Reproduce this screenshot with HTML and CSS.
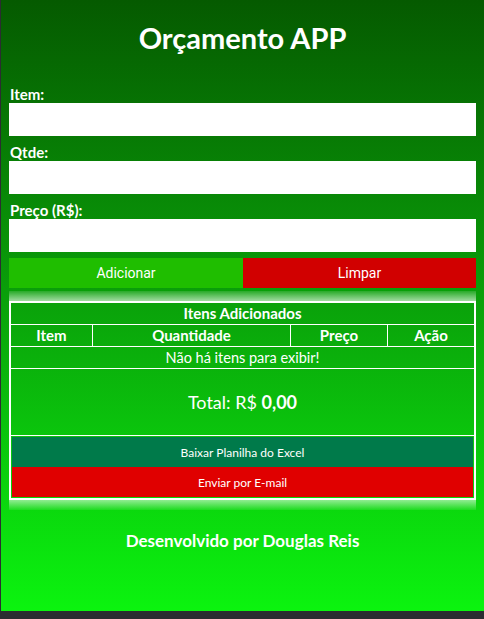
FILE: index.html
```html
<!DOCTYPE html>
<html lang="pt-BR">
<head>
<meta charset="utf-8">
<title>Orçamento APP</title>
<link rel="stylesheet" href="styles.css">
</head>
<body>
<main class="app">
  <h1 class="title">Orçamento APP</h1>
  <form class="form">
    <label class="label" for="item">Item:</label>
    <input class="input" id="item" type="text">
    <label class="label" for="qtde">Qtde:</label>
    <input class="input" id="qtde" type="text">
    <label class="label" for="preco">Preço (R$):</label>
    <input class="input" id="preco" type="text">
    <div class="actions">
      <button type="button" class="btn btn-add">Adicionar</button>
      <button type="button" class="btn btn-clear">Limpar</button>
    </div>
  </form>
  <section class="glow">
    <div class="table">
      <div class="row caption">Itens Adicionados</div>
      <div class="row cols">
        <div class="cell">Item</div>
        <div class="cell">Quantidade</div>
        <div class="cell">Preço</div>
        <div class="cell">Ação</div>
      </div>
      <div class="row empty">Não há itens para exibir!</div>
      <div class="row total">Total: R$&nbsp;<strong>0,00</strong></div>
      <div class="row export">
        <button type="button" class="xbtn xbtn-excel">Baixar Planilha do Excel</button>
        <button type="button" class="xbtn xbtn-mail">Enviar por E-mail</button>
      </div>
    </div>
  </section>
  <footer class="footer">Desenvolvido por Douglas Reis</footer>
</main>
</body>
</html>
```

FILE: styles.css
```css
html, body {
  margin: 0;
  padding: 0;
}
body {
  background: #2b2d31;
  height: 619px;
  overflow: hidden;
  font-family: Lato, "Open Sans", sans-serif;
  color: #fff;
}
.app {
  margin-left: 1px;
  height: 611px;
  box-sizing: border-box;
  padding: 21px 8px 0;
  background: linear-gradient(to bottom, #055a00 0%, #0a9f0a 48%, #0bf40f 100%);
}
.title {
  margin: 0 0 31px;
  font-size: 29px;
  line-height: 34px;
  font-weight: 700;
  text-align: center;
}
.form {
  display: flex;
  flex-direction: column;
}
.label {
  font-size: 15px;
  line-height: 17px;
  font-weight: 700;
  margin-left: 1px;
}
.input {
  display: block;
  height: 33px;
  margin: 0 0 8px;
  border: 0;
  padding: 0 6px;
  background: #fff;
  box-sizing: border-box;
  width: 100%;
}
.actions {
  display: flex;
  margin-top: -2px;
}
.btn {
  flex: 1;
  height: 30px;
  border: 0;
  color: #fff;
  font-family: Roboto, sans-serif;
  font-size: 14px;
}
.btn-add { background: #1fbe00; flex: 0 0 234px; }
.btn-clear { background: #d10000; }
.glow {
  margin-top: 3px;
  padding: 10px 0;
  background:
    linear-gradient(to bottom, rgba(255,255,255,0.12), rgba(255,255,255,0.62)) top / 100% 10px no-repeat,
    linear-gradient(to top, rgba(255,255,255,0.08), rgba(255,255,255,0.55)) bottom / 100% 10px no-repeat;
}
.table {
  border: 2px solid #fff;
}
.row {
  border-bottom: 1px solid #fff;
  text-align: center;
}
.caption {
  height: 21px;
  line-height: 21px;
  font-size: 15px;
  font-weight: 700;
}
.cols {
  display: grid;
  grid-template-columns: 82px 198px 97px 1fr;
  height: 21px;
  line-height: 21px;
  font-size: 15px;
  font-weight: 700;
}
.cols .cell { border-right: 1px solid #fff; }
.cols .cell:last-child { border-right: 0; }
.empty {
  height: 21px;
  line-height: 21px;
  font-size: 14.5px;
}
.total {
  height: 66px;
  line-height: 66px;
  font-size: 18px;
}
.export {
  border-bottom: 0;
  padding: 1px;
  display: flex;
  flex-direction: column;
}
.xbtn {
  height: 30px;
  border: 0;
  color: #fff;
  font-family: Lato, sans-serif;
  font-size: 12px;
}
.xbtn-excel { background: #007a4a; }
.xbtn-mail { background: #e00000; }
.footer {
  margin-top: 21px;
  font-size: 17px;
  line-height: 20px;
  font-weight: 700;
  text-align: center;
}
```
